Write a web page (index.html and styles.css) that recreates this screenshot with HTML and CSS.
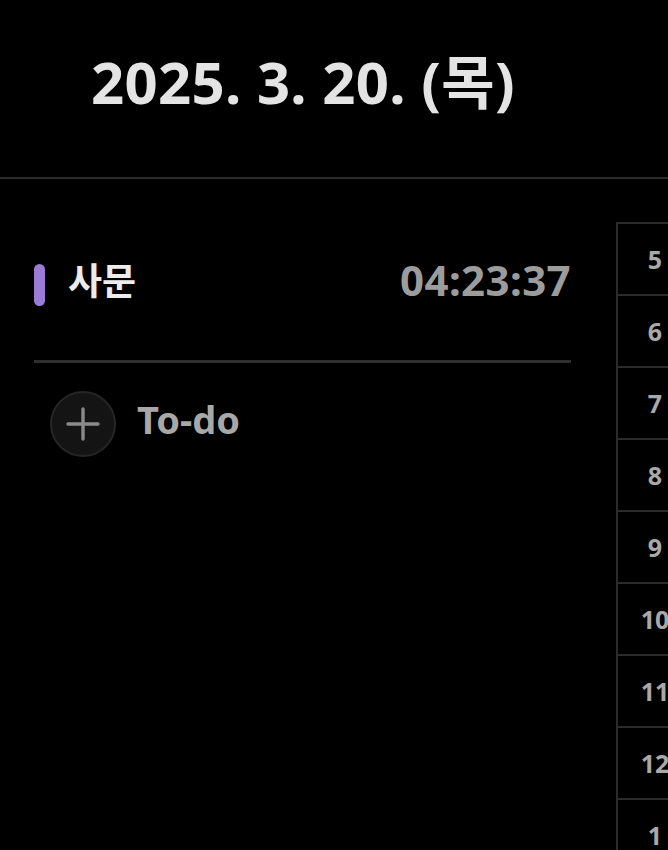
FILE: index.html
```html
<!DOCTYPE html>
<html lang="ko">
<head>
<meta charset="utf-8">
<link rel="stylesheet" href="styles.css">
</head>
<body>
<div class="page">
  <header class="header">
    <h1 class="date">2025. 3. 20. (목)</h1>
  </header>
  <main class="main">
    <section class="left">
      <div class="task">
        <span class="bar"></span>
        <span class="name">사문</span>
        <span class="time">04:23:37</span>
      </div>
      <div class="divider"></div>
      <div class="todo">
        <span class="plus">
          <svg width="62" height="62" viewBox="0 0 62 62">
            <path d="M31 16 V46 M16 31 H46" stroke="#8a8a8a" stroke-width="3.4" stroke-linecap="round" fill="none"/>
          </svg>
        </span>
        <span class="todo-label">To-do</span>
      </div>
    </section>
    <section class="grid">
      <div class="cell">5</div>
      <div class="cell">6</div>
      <div class="cell">7</div>
      <div class="cell">8</div>
      <div class="cell">9</div>
      <div class="cell">10</div>
      <div class="cell">11</div>
      <div class="cell">12</div>
      <div class="cell">1</div>
    </section>
  </main>
</div>
</body>
</html>
```
FILE: styles.css
```css
html, body {
  margin: 0;
  padding: 0;
  background: #000;
  overflow: hidden;
  height: 850px;
}
body {
  font-family: "Noto Sans", "Noto Sans CJK KR", sans-serif;
  color: #e6e6e6;
}
.page {
  width: 668px;
  height: 850px;
  overflow: hidden;
}
.header {
  height: 177px;
  border-bottom: 2px solid #2a2a2a;
  display: flex;
  align-items: flex-start;
}
.date {
  margin: 0;
  padding: 42px 0 0 91px;
  font-size: 58px;
  font-weight: 700;
  color: #e4e4e4;
  letter-spacing: 0.3px;
  line-height: 80px;
}
.main {
  display: flex;
  padding-top: 43px;
}
.left {
  flex: none;
  width: 537px;
  margin-left: 34px;
  margin-right: 45px;
}
.task {
  display: flex;
  align-items: center;
  height: 92px;
  margin-top: 17px;
}
.bar {
  width: 11px;
  height: 42px;
  border-radius: 6px;
  background: #9b7bd6;
  flex: none;
}
.name {
  margin-left: 23px;
  margin-bottom: 12px;
  font-size: 37px;
  font-weight: 700;
  color: #ececec;
}
.time {
  margin-left: auto;
  margin-bottom: 12px;
  font-size: 42px;
  font-weight: 700;
  color: #9c9c9c;
  letter-spacing: 0.4px;
}
.divider {
  height: 3px;
  background: #2e2e2e;
  margin-top: 29px;
}
.todo {
  display: flex;
  align-items: center;
  margin-top: 28px;
  margin-left: 16px;
}
.plus {
  width: 62px;
  height: 62px;
  border-radius: 50%;
  background: #141414;
  border: 2px solid #262626;
  display: flex;
  align-items: center;
  justify-content: center;
}
.plus svg {
  width: 62px;
  height: 62px;
}
.todo-label {
  margin-left: 21px;
  margin-bottom: 10px;
  font-size: 38px;
  font-weight: 700;
  color: #a8a8a8;
}
.grid {
  flex: none;
  width: 74px;
  border-left: 2px solid #2b2b2b;
  border-top: 2px solid #2b2b2b;
}
.cell {
  height: 70px;
  border-bottom: 2px solid #2b2b2b;
  display: flex;
  align-items: center;
  justify-content: center;
  font-size: 25px;
  font-weight: 700;
  color: #a9a9a9;
}
```
